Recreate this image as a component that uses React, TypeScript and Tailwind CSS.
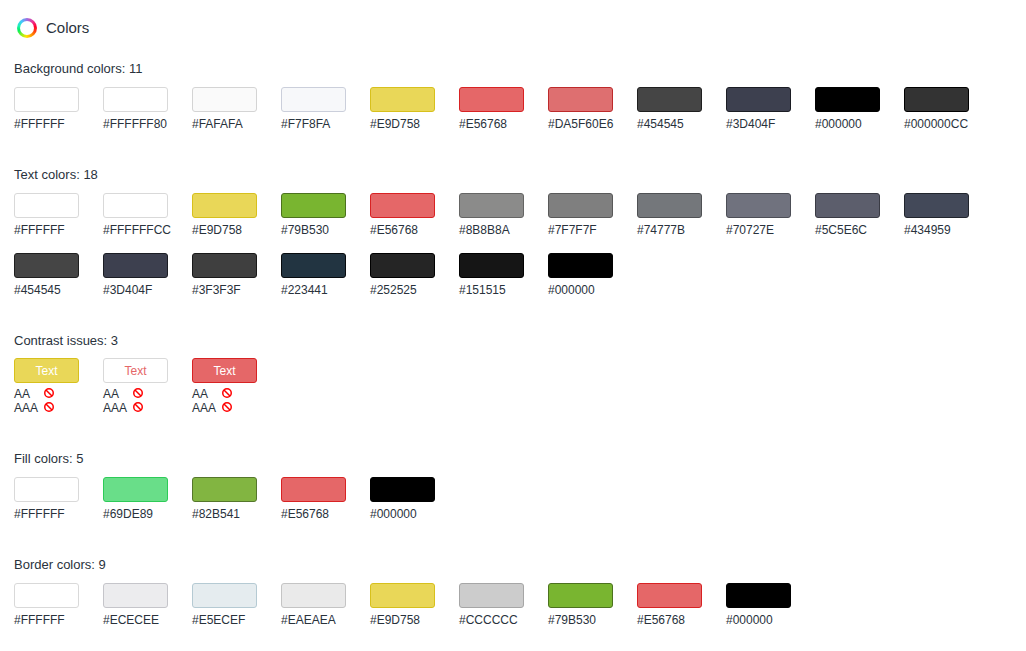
type Swatch = { label: string; style: string };

const background: Swatch[] = [
  { label: '#FFFFFF', style: 'bg-[#ffffff] border-[#d9d9d9]' },
  { label: '#FFFFFF80', style: 'bg-[#ffffff80] border-[#d9d9d9]' },
  { label: '#FAFAFA', style: 'bg-[#fafafa] border-[#d4d4d4]' },
  { label: '#F7F8FA', style: 'bg-[#f7f8fa] border-[#cbcfdb]' },
  { label: '#E9D758', style: 'bg-[#e9d758] border-[#d7c01c]' },
  { label: '#E56768', style: 'bg-[#e56768] border-[#d82223]' },
  { label: '#DA5F60E6', style: 'bg-[#da5f60e6] border-[#bd2a2b]' },
  { label: '#454545', style: 'bg-[#454545] border-[#1f1f1f]' },
  { label: '#3D404F', style: 'bg-[#3d404f] border-[#1b1d24]' },
  { label: '#000000', style: 'bg-[#000000] border-[#000000]' },
  { label: '#000000CC', style: 'bg-[#000000cc] border-[#000000]' },
];

const text: Swatch[] = [
  { label: '#FFFFFF', style: 'bg-[#ffffff] border-[#d9d9d9]' },
  { label: '#FFFFFFCC', style: 'bg-[#ffffffcc] border-[#d9d9d9]' },
  { label: '#E9D758', style: 'bg-[#e9d758] border-[#d7c01c]' },
  { label: '#79B530', style: 'bg-[#79b530] border-[#4c721e]' },
  { label: '#E56768', style: 'bg-[#e56768] border-[#d82223]' },
  { label: '#8B8B8A', style: 'bg-[#8b8b8a] border-[#656564]' },
  { label: '#7F7F7F', style: 'bg-[#7f7f7f] border-[#595959]' },
  { label: '#74777B', style: 'bg-[#74777b] border-[#4f5154]' },
  { label: '#70727E', style: 'bg-[#70727e] border-[#4c4e56]' },
  { label: '#5C5E6C', style: 'bg-[#5c5e6c] border-[#3a3b44]' },
  { label: '#434959', style: 'bg-[#434959] border-[#21252d]' },
  { label: '#454545', style: 'bg-[#454545] border-[#1f1f1f]' },
  { label: '#3D404F', style: 'bg-[#3d404f] border-[#1b1d24]' },
  { label: '#3F3F3F', style: 'bg-[#3f3f3f] border-[#191919]' },
  { label: '#223441', style: 'bg-[#223441] border-[#070b0e]' },
  { label: '#252525', style: 'bg-[#252525] border-[#000000]' },
  { label: '#151515', style: 'bg-[#151515] border-[#000000]' },
  { label: '#000000', style: 'bg-[#000000] border-[#000000]' },
];

const contrast = [
  'bg-[#e9d758] border-[#d7c01c] text-white',
  'bg-white border-[#d9d9d9] text-[#e56768]',
  'bg-[#e56768] border-[#d82223] text-white',
];

const fill: Swatch[] = [
  { label: '#FFFFFF', style: 'bg-[#ffffff] border-[#d9d9d9]' },
  { label: '#69DE89', style: 'bg-[#69de89] border-[#2dcb58]' },
  { label: '#82B541', style: 'bg-[#82b541] border-[#55772b]' },
  { label: '#E56768', style: 'bg-[#e56768] border-[#d82223]' },
  { label: '#000000', style: 'bg-[#000000] border-[#000000]' },
];

const border: Swatch[] = [
  { label: '#FFFFFF', style: 'bg-[#ffffff] border-[#d9d9d9]' },
  { label: '#ECECEE', style: 'bg-[#ececee] border-[#c5c5ca]' },
  { label: '#E5ECEF', style: 'bg-[#e5ecef] border-[#b5cad3]' },
  { label: '#EAEAEA', style: 'bg-[#eaeaea] border-[#c4c4c4]' },
  { label: '#E9D758', style: 'bg-[#e9d758] border-[#d7c01c]' },
  { label: '#CCCCCC', style: 'bg-[#cccccc] border-[#a6a6a6]' },
  { label: '#79B530', style: 'bg-[#79b530] border-[#4c721e]' },
  { label: '#E56768', style: 'bg-[#e56768] border-[#d82223]' },
  { label: '#000000', style: 'bg-[#000000] border-[#000000]' },
];

function SwatchSection({ title, items }: { title: string; items: Swatch[] }) {
  return (
    <section>
      <h2 className="text-[13px] leading-4">
        {title}: {items.length}
      </h2>
      <ul className="mt-2.5 flex flex-wrap gap-x-6 gap-y-[15px]">
        {items.map((item) => (
          <li key={item.label} className="w-[65px]">
            <div className={`h-[25px] rounded-[3px] border ${item.style}`} />
            <p className="mt-1 text-xs leading-4">{item.label}</p>
          </li>
        ))}
      </ul>
    </section>
  );
}

function BanIcon() {
  return (
    <svg viewBox="0 0 10 10" className="mt-px size-2.5" fill="none" stroke="#ff0000" strokeWidth="1.5" role="img" aria-label="Fail">
      <circle cx="5" cy="5" r="4.25" />
      <path d="M2 2 8 8" />
    </svg>
  );
}

function ContrastSection() {
  return (
    <section className="pb-px">
      <h2 className="text-[13px] leading-4">Contrast issues: {contrast.length}</h2>
      <ul className="mt-[9px] flex flex-wrap gap-x-6 gap-y-[15px]">
        {contrast.map((style) => (
          <li key={style} className="w-[65px]">
            <div className={`flex h-[25px] items-center justify-center rounded-[3px] border text-xs ${style}`}>Text</div>
            <div className="mt-1 grid grid-cols-[30px_10px] items-start text-xs leading-[14px]">
              <span>AA</span>
              <BanIcon />
              <span>AAA</span>
              <BanIcon />
            </div>
          </li>
        ))}
      </ul>
    </section>
  );
}

export default function App() {
  return (
    <main className="min-h-screen bg-white p-3.5 pb-6 font-['Liberation_Sans',Arial,sans-serif] text-[#29323c]">
      <header className="flex h-7 items-center gap-[9px] pl-[3px]">
        <span className="size-5 rounded-full bg-[conic-gradient(#a06ee0,#f0308c_45deg,#ff0030_80deg,#ff3a10_110deg,#ff9500_145deg,#ffe600_185deg,#8cf020_220deg,#00f060_255deg,#20f0b8_285deg,#40c8ff_320deg,#a06ee0_360deg)] p-[3px]">
          <span className="block size-full rounded-full bg-white" />
        </span>
        <h1 className="text-[15px] leading-5">Colors</h1>
      </header>
      <div className="mt-[19px] flex flex-col gap-[35px]">
        <SwatchSection title="Background colors" items={background} />
        <SwatchSection title="Text colors" items={text} />
        <ContrastSection />
        <SwatchSection title="Fill colors" items={fill} />
        <SwatchSection title="Border colors" items={border} />
      </div>
    </main>
  );
}
